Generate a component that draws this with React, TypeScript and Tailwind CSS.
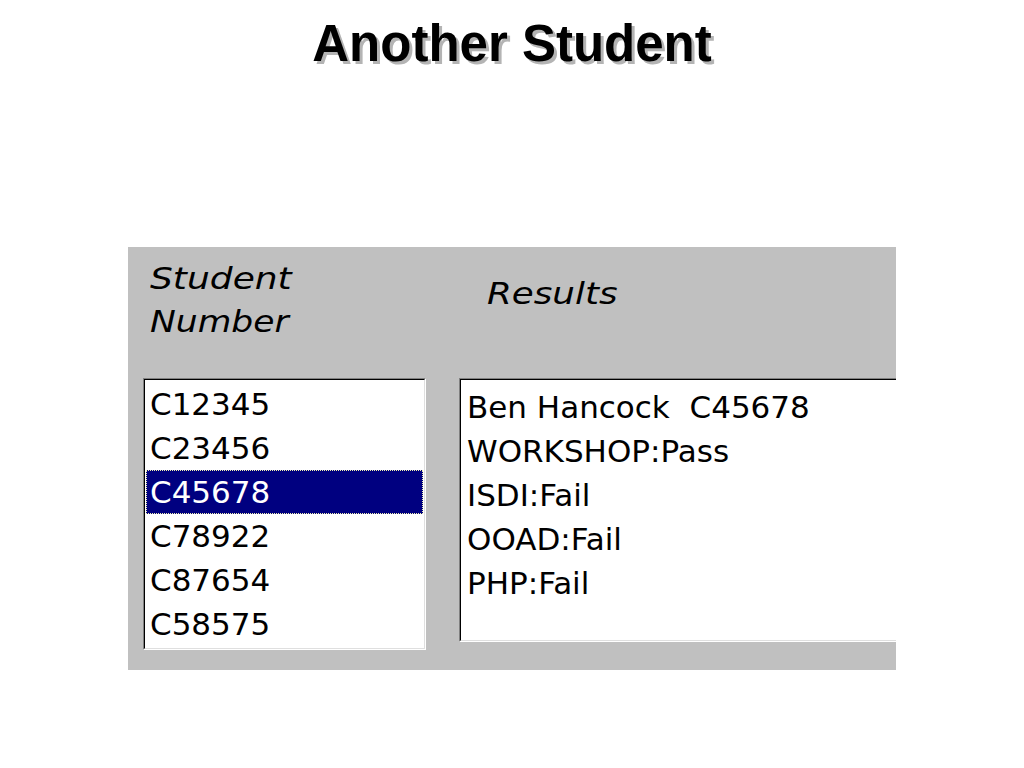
const students = ['C12345', 'C23456', 'C45678', 'C78922', 'C87654', 'C58575']

const results = ['Ben Hancock  C45678', 'WORKSHOP:Pass', 'ISDI:Fail', 'OOAD:Fail', 'PHP:Fail']

export default function App() {
  const selected = 'C45678'

  return (
    <div className="min-h-[768px] w-[1024px] bg-white">
      <h1 className="pt-[18px] text-center font-['Liberation_Sans',Arial,sans-serif] text-[51px] font-bold leading-none text-black [text-shadow:3px_3px_0_#b4b4b4]">
        Another Student
      </h1>

      <div className="ml-[128px] mt-[178px] h-[423px] w-[768px] overflow-hidden bg-[#c0c0c0] font-['DejaVu_Sans',sans-serif]">
        {/* headers */}
        <div className="flex h-[131px] pl-[22px]">
          <div className="w-[337px] pt-[10px] text-[30px] italic leading-[43px] text-black">
            <div className="origin-left scale-x-[1.2]">Student</div>
            <div className="origin-left scale-x-[1.15]">Number</div>
          </div>
          <div className="origin-left scale-x-[1.19] pt-[25px] text-[30px] italic leading-[43px] text-black">Results</div>
        </div>

        {/* boxes */}
        <div className="flex gap-[33px] pl-[15px]">
          <div className="h-[272px] w-[283px] shrink-0 border border-b-white border-l-[#808080] border-r-white border-t-[#808080]">
            <div className="h-full w-full border border-b-[#dfdfdf] border-l-black border-r-[#dfdfdf] border-t-black bg-white pt-[2px]">
              {students.map((s) => (
                <div
                  key={s}
                  className={
                    s === selected
                      ? 'mx-px h-[44px] border border-dotted border-[#f0f0b0] bg-[#000080] pl-[3px] text-[31px] leading-[42px] text-white'
                      : 'mx-px h-[44px] pl-[4px] text-[31px] leading-[44px] text-black'
                  }
                >
                  {s}
                </div>
              ))}
            </div>
          </div>

          <div className="h-[264px] w-[600px] shrink-0 border border-b-white border-l-[#808080] border-r-white border-t-[#808080]">
            <div className="h-full w-full border border-b-[#dfdfdf] border-l-black border-r-[#dfdfdf] border-t-black bg-white pl-[6px] pt-[5px]">
              {results.map((r) => (
                <div key={r} className="whitespace-pre text-[31px] leading-[44px] text-black">
                  {r}
                </div>
              ))}
            </div>
          </div>
        </div>
      </div>
    </div>
  )
}
